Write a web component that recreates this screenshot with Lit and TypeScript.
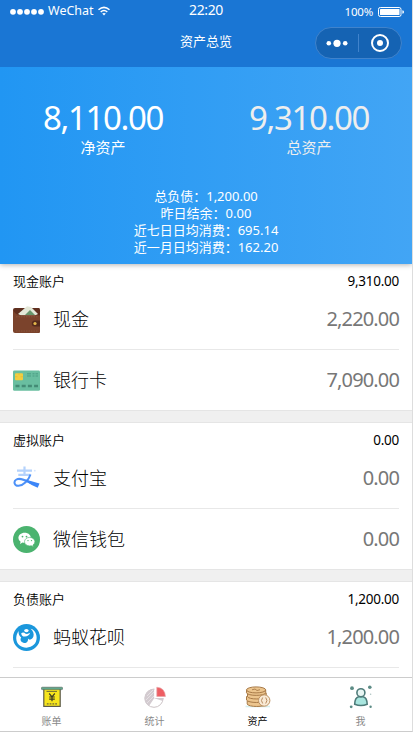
import { LitElement, html, css, svg } from "lit";
import { customElement, property } from "lit/decorators.js";
import { classMap } from "lit/directives/class-map.js";

const icons: Record<string, unknown> = {
  wallet: html`<svg width="27" height="27" viewBox="0 0 27 27">
    <path d="M0 4Q0 2 2 2H26Q27 2 27 4V12H0Z" fill="#5f2f1f" />
    <path d="M5 8L14 0.3L18 1L25 8L22 9.5H8Z" fill="#e4e8d8" />
    <path d="M12 9L17 4L22 9Z" fill="#67966c" />
    <path d="M0 3.5Q2 9 8 9.2H27V26Q27 27 26 27H2Q0 27 0 25Z" fill="#7b432c" />
    <path d="M3 10.8H25M3 25H25" stroke="#925b42" stroke-width=".7" stroke-dasharray="1.5 1" />
    <path d="M27 14.5H21.5Q18.8 14.8 18.8 17.5Q18.8 20.3 21.5 20.5H27Z" fill="#552a1c" />
    <circle cx="22" cy="17.5" r="1.6" fill="#e5b84c" />
  </svg>`,
  card: html`<svg width="27" height="27" viewBox="0 0 27 27">
    <rect x="0" y="3.6" width="27" height="20.2" rx="1.4" fill="#69bea0" />
    <rect x="2" y="6.2" width="8" height="7" rx="1" fill="#f2cd40" />
    <path d="M2 9.7H4.5M7.5 9.7H10M6 6.2V8" stroke="#dcb735" stroke-width=".6" />
    <path d="M14 6.8H25M14 9H25" stroke="#4b9c83" stroke-width="1" stroke-dasharray="4 1.5 2 1" />
    <path d="M2.5 19H25" stroke="#438b75" stroke-width="2.4" stroke-dasharray="4 2.2" />
  </svg>`,
  alipay: html`<svg width="27" height="27" viewBox="0 0 27 27" fill="none">
    <path d="M4 5.6H19M11.5 1.6V9.8M5.3 9.8H17.5" stroke="#b4d2fc" stroke-width="2.2" />
    <circle cx="21.8" cy="5.7" r=".9" fill="#d4e5fe" />
    <path d="M17.5 9.5C15.5 15.5 10.5 20.5 5.5 20.8C1.2 21 .2 16.3 3.4 14.5C7 12.5 12 15 18 18" stroke="#4d91f8" stroke-width="2" />
    <path d="M12.5 14.5L26.5 18.4L24.7 22.7Q18.5 20.5 12.5 16Z" fill="#3c86f8" />
  </svg>`,
  wechat: html`<svg width="27" height="27" viewBox="0 0 27 27">
    <circle cx="13.5" cy="13.5" r="13.5" fill="#4bb36f" />
    <path d="M11.7 6.8C8 6.8 5.4 9.1 5.4 12Q5.4 14.3 7.6 15.8L7 17.9L9.5 16.6Q11 17 12.8 16.8C15.8 16.5 17.8 14.4 17.8 11.8C17.8 9 15.2 6.8 11.7 6.8Z" fill="#fff" />
    <path d="M16.7 11.4C13.7 11.4 11.5 13.2 11.5 15.7C11.5 18 13.8 19.9 16.7 19.9L18.3 19.7L20.4 20.7L19.9 19Q21.9 17.7 21.9 15.7C21.9 13.3 19.6 11.4 16.7 11.4Z" fill="#fff" stroke="#4bb36f" stroke-width=".6" />
    <g fill="#4bb36f"><circle cx="9.5" cy="10.6" r=".9" /><circle cx="13.5" cy="10.6" r=".9" /><circle cx="15" cy="14.6" r=".7" /><circle cx="18.5" cy="14.6" r=".7" /></g>
  </svg>`,
  huabei: html`<svg width="27" height="27" viewBox="0 0 27 27">
    <circle cx="13.5" cy="13.5" r="13.5" fill="#1b97dc" />
    <path d="M5.6 7C2 12 2.8 18.2 6.4 21.3C10.5 24.6 17.3 24.5 21 20.6C24.6 16.8 24.6 10.4 20.8 6.4Q19.4 5 17.6 4.8Q21.6 8.4 20.4 12.6C19.4 16 16 16.4 14.9 14.6C15.6 17.6 13.4 19.4 11 19C7.8 18.4 6.8 15.6 8.2 13.6Q5.2 11.4 5.6 7Z" fill="#fff" />
    <ellipse cx="13.4" cy="6.6" rx="2.2" ry="1.6" fill="#fff" />
    <path d="M8.2 9.2Q8.6 12.6 11.6 12.6Q15.6 12.8 17.2 8.8Q15 10.4 12.6 9.8Q10.6 7.6 8.2 9.2Z" fill="#fff" />
  </svg>`,
  bill: html`<svg width="22" height="22" viewBox="0 0 22 22">
    <rect x="2.8" y="2.4" width="16.4" height="18" fill="#f7e51c" stroke="#5c5a4c" stroke-width="1.2" />
    <rect x=".5" y="1.2" width="21" height="2.4" rx=".6" fill="#5fa78b" stroke="#55685f" stroke-width=".6" />
    <path d="M5.5 5.4H16" stroke="#716b34" stroke-width="1" />
    <path d="M8.2 7.5L11 10.8L13.8 7.5M11 10.8V15.2M8.2 11H13.8M8.2 13.1H13.8" fill="none" stroke="#3d3b25" stroke-width="1.2" />
    <path d="M5.8 17.8H16.4" stroke="#716b34" stroke-width="1.2" stroke-dasharray="1.8 1" />
  </svg>`,
  chart: html`<svg width="22" height="22" viewBox="0 0 22 22">
    <circle cx="10" cy="12.2" r="9.1" fill="#fff" stroke="#cbc2c5" stroke-width="1" />
    <path d="M10.2 12.2L5 20A9.3 9.3 0 0 1 10.2 2.9Z" fill="#d3cbd0" />
    <path d="M10.2 12.2L18.8 15A9 9 0 0 0 19 10L12 10Z" fill="#d3cbd0" />
    <path d="M3 10L9 4M2 14L10 6M3 17L10 10" stroke="#eee9ec" stroke-width=".7" />
    <path d="M10.5 12V0H13Q22 1.5 22 12Z" fill="#fff" />
    <path d="M12.8 10.5V1.2Q21 1.8 21.4 10.5Z" fill="#ee5e63" stroke="#e7a3a7" stroke-width=".7" />
  </svg>`,
  coins: html`<svg width="26" height="22" viewBox="0 0 26 22">
    <path d="M.5 20.5H25" stroke="#d6eeee" stroke-width="1.6" />
    <g fill="#ecc58e" stroke="#a87a48" stroke-width="1">
      <path d="M2.2 14.5V18C3 21.3 20.5 21.3 21.2 18V14.5Z" />
      <path d="M1.5 10.5V14C3 17.3 20 17.3 20.7 14V10.5Z" />
      <path d="M2.5 7V10.5C3 13.8 20.5 13.8 21.2 10.5V7Z" />
      <path d="M1.5 4V6.8C2.5 10.2 20 10.2 20.7 6.8V4Z" />
      <ellipse cx="11.1" cy="3.9" rx="9.6" ry="3" />
    </g>
    <path d="M7 3.8L10 3L12 4.5L15 3.7" fill="none" stroke="#a87a48" stroke-width=".9" />
    <circle cx="19.2" cy="14.5" r="5.7" fill="#f9ead5" stroke="#bd9262" stroke-width="1" />
    <path d="M17.7 11.5Q15.2 14.5 17.7 17.5M20.7 11.5Q23.2 14.5 20.7 17.5" fill="none" stroke="#b78c61" stroke-width="1" />
  </svg>`,
  person: html`<svg width="24" height="24" viewBox="0 0 24 24">
    <path d="M5.7 19.3Q5.9 12.6 9.6 11.7H14.2Q18 12.6 18.2 19.3Q12 21.8 5.7 19.3Z" fill="#a9e6df" stroke="#4e7b79" stroke-width="1.6" />
    <circle cx="11.9" cy="7.7" r="4" fill="#e9f6f4" stroke="#4e7b79" stroke-width="1.6" />
    <g fill="#5d8c86"><circle cx="3" cy="3.2" r="1.9" /><circle cx="20.8" cy="2.2" r="1.8" /><circle cx="2.2" cy="21.8" r="1.4" /><circle cx="21.6" cy="21.8" r="1.2" /><circle cx="21.6" cy="9.2" r=".8" opacity=".5" /></g>
  </svg>`,
};

const fontStack = css`"Noto Sans", "Noto Sans CJK SC", sans-serif`;

@customElement("status-bar")
export class StatusBar extends LitElement {
  static styles = css`
    :host { display: grid; grid-template-columns: 1fr auto 1fr; align-items: center; height: 20px; padding: 0 8px 0 10px; color: #fff; font: 13px/20px ${fontStack}; }
    .left, .right { display: flex; align-items: center; }
    .left { gap: 4px; font-size: 12.5px; }
    .right { justify-content: flex-end; gap: 5px; font-size: 11.5px; letter-spacing: -0.2px; padding-top: 2px; }
    .time { font-size: 14px; letter-spacing: -0.35px; line-height: 18px; margin: 0 0 2px -2px; }
    svg { display: block; }
  `;
  render() {
    return html`
      <div class="left">
        <svg width="34" height="7" viewBox="0 0 34 7" fill="#fff">
          ${[3, 10, 17, 24, 31].map((x) => svg`<circle cx=${x} cy="3.8" r="2.9" />`)}
        </svg>
        <span>WeChat</span>
        <svg width="12" height="10" viewBox="0 0 12 10" fill="none" stroke="#fff" stroke-width="1.5">
          <path d="M.5 3.7Q6 -1 11.5 3.7M2.7 6Q6 3.1 9.3 6" /><path d="M4.2 7.6Q6 6.3 7.8 7.6L6 9.6Z" fill="#fff" stroke="none" />
        </svg>
      </div>
      <div class="time">22:20</div>
      <div class="right">
        <span>100%</span>
        <svg width="26" height="10" viewBox="0 0 26 10">
          <rect x=".5" y=".5" width="22.5" height="9" rx="1.8" fill="none" stroke="#fff" />
          <rect x="2" y="2" width="19.5" height="6" rx=".6" fill="#fff" />
          <path d="M24.4 3.2Q26 3.5 26 5T24.4 6.8Z" fill="#fff" />
        </svg>
      </div>`;
  }
}

@customElement("account-group")
export class AccountGroup extends LitElement {
  @property() label = "";
  @property() total = "";
  @property({ attribute: false }) rows: string[][] = [];
  @property({ type: Boolean }) more = false;

  static styles = css`
    :host { display: block; flex: none; box-sizing: border-box; background: #fff; padding: 9px 13px 0; font-family: ${fontStack}; color: #000; }
    .head { display: flex; justify-content: space-between; font-size: 13px; line-height: 16px; height: 16px; font-weight: 350; }
    .total { font-size: 13.5px; font-weight: 400; letter-spacing: -0.25px; }
    .row { display: flex; align-items: center; box-sizing: border-box; height: 61px; border-bottom: 1px solid #e8e8e8; }
    .row.last { height: 60px; border-bottom: 0; }
    .icon { width: 27px; height: 27px; margin-right: 13px; }
    .icon svg { display: block; }
    .name { flex: 1; font-size: 18px; line-height: 26px; font-weight: 300; }
    .amount { font-size: 20px; line-height: 26px; letter-spacing: -0.85px; color: #777; }
  `;
  render() {
    return html`
      <div class="head"><span>${this.label}</span><span class="total">${this.total}</span></div>
      ${this.rows.map(
        ([icon, name, amount], i) => html`
          <div class=${classMap({ row: true, last: !this.more && i === this.rows.length - 1 })}>
            <div class="icon">${icons[icon]}</div>
            <span class="name">${name}</span>
            <span class="amount">${amount}</span>
          </div>`
      )}`;
  }
}

@customElement("app-root")
export class AppRoot extends LitElement {
  static styles = css`
    :host { display: flex; flex-direction: column; box-sizing: border-box; width: 413px; height: 732px; overflow: hidden; border-right: 1px solid #ddd; border-bottom: 1px solid #ccc; background: #fff; font-family: ${fontStack}; }
    .top { flex: none; position: relative; z-index: 1; height: 67px; background: #1a76d4; color: #fff; }
    .nav { display: grid; grid-template-columns: 1fr auto 1fr; align-items: center; height: 46px; }
    .title { font-size: 13px; line-height: 18px; margin-bottom: 4px; }
    .capsule { justify-self: end; margin-right: 10px; display: flex; align-items: center; box-sizing: border-box; width: 87px; height: 32px; border: 1px solid #4083cc; border-radius: 16px; background: #1563b3; }
    .capsule svg { display: block; }
    .summary { flex: none; position: relative; box-sizing: border-box; height: 197px; padding-top: 30px; background: linear-gradient(90deg, #2196f3, #42a5f5); color: #fff; box-shadow: 0 1px 5px rgba(0, 0, 0, 0.3); }
    .figures { display: grid; grid-template-columns: 1fr 1fr; text-align: center; }
    .value { font-size: 33px; line-height: 42px; letter-spacing: -1.35px; }
    .caption { font-size: 15px; line-height: 17px; }
    .dim { color: #eee; }
    .lines { margin-top: 32px; text-align: center; font-size: 13px; line-height: 17px; }
    .list { flex: 1; min-height: 0; display: flex; flex-direction: column; gap: 13px; overflow: hidden; background: #f0f0f0; }
    account-group { box-shadow: 0 0 0 1px #e5e5e5; }
    account-group:last-child { flex: 1 0 auto; }
    .tabs { flex: none; position: relative; display: grid; grid-template-columns: repeat(4, 1fr); box-sizing: border-box; height: 54px; border-top: 1px solid #ccc; background: #fff; }
    .tab { display: flex; flex-direction: column; align-items: center; padding-top: 7px; font-size: 10px; line-height: 14px; color: #888; }
    .glyph { height: 29px; display: flex; align-items: flex-start; padding-top: 1px; box-sizing: border-box; }
    .tab:last-child .glyph { padding-top: 0; }
    .glyph svg { display: block; }
    .active { color: #000; }
  `;
  render() {
    const lines = ["总负债：1,200.00", "昨日结余：0.00", "近七日日均消费：695.14", "近一月日均消费：162.20"];
    const tabs = [["bill", "账单"], ["chart", "统计"], ["coins", "资产"], ["person", "我"]];
    return html`
      <div class="top">
        <status-bar></status-bar>
        <div class="nav">
          <span></span>
          <span class="title">资产总览</span>
          <div class="capsule">
            <svg width="85" height="30" viewBox="0 0 85 30" fill="#fff">
              <circle cx="12.8" cy="15.3" r="2.3" /><circle cx="21" cy="15.3" r="3.6" /><circle cx="29.2" cy="15.3" r="2.3" />
              <path d="M42.5 6V24" stroke="#4083cc" />
              <circle cx="64" cy="15" r="8" fill="none" stroke="#fff" stroke-width="2" /><circle cx="64" cy="15" r="3" />
            </svg>
          </div>
        </div>
      </div>
      <div class="summary">
        <div class="figures">
          <div><div class="value">8,110.00</div><div class="caption">净资产</div></div>
          <div class="dim"><div class="value">9,310.00</div><div class="caption">总资产</div></div>
        </div>
        <div class="lines">${lines.map((l) => html`<div>${l}</div>`)}</div>
      </div>
      <div class="list">
        <account-group label="现金账户" total="9,310.00" .rows=${[["wallet", "现金", "2,220.00"], ["card", "银行卡", "7,090.00"]]}></account-group>
        <account-group label="虚拟账户" total="0.00" .rows=${[["alipay", "支付宝", "0.00"], ["wechat", "微信钱包", "0.00"]]}></account-group>
        <account-group label="负债账户" total="1,200.00" more .rows=${[["huabei", "蚂蚁花呗", "1,200.00"]]}></account-group>
      </div>
      <div class="tabs">
        ${tabs.map(([icon, text]) => html`
          <div class=${classMap({ tab: true, active: icon === "coins" })}>
            <div class="glyph">${icons[icon]}</div><span>${text}</span>
          </div>`)}
      </div>`;
  }
}
